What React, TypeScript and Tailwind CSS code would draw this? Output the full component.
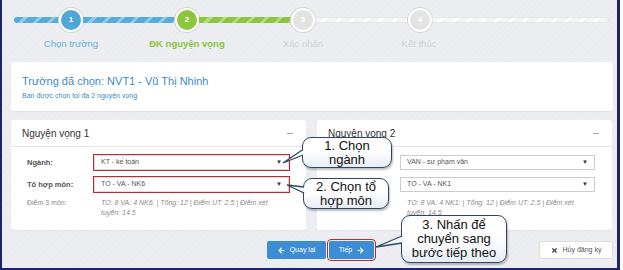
import React from 'react';
import { FaArrowLeft, FaArrowRight, FaTimes } from 'react-icons/fa';

const steps = [
  { n: '1', label: 'Chọn trường', circle: 'bg-[#4ea7d6] text-white', text: 'text-[#62b0db]' },
  { n: '2', label: 'ĐK nguyện vọng', circle: 'bg-[#8cc63f] text-white', text: 'text-[#8cc43f] font-bold' },
  { n: '3', label: 'Xác nhận', circle: 'bg-[#e3e3e3] text-white', text: 'text-[#d2d2d2]' },
  { n: '4', label: 'Kết thúc', circle: 'bg-[#e3e3e3] text-white', text: 'text-[#d2d2d2]' },
];

const blueBar =
  'bg-[repeating-linear-gradient(135deg,#56acd9_0px,#56acd9_7px,#8fcbe9_7px,#8fcbe9_10px)]';
const greenBar =
  'bg-[repeating-linear-gradient(135deg,#8cc63f_0px,#8cc63f_7px,#b3da7c_7px,#b3da7c_10px)]';
const grayBar =
  'bg-[repeating-linear-gradient(135deg,#f4f4f4_0px,#f4f4f4_7px,#ffffff_7px,#ffffff_10px)]';

function Circle({ n, cls }: { n: string; cls: string }) {
  return (
    <div
      className={`w-6 h-6 shrink-0 rounded-full border-2 border-white shadow-[0_0_0_1px_#d6d6d6] flex items-center justify-center text-[8px] font-bold ${cls}`}
    >
      {n}
    </div>
  );
}

function Select({ value, marked }: { value: string; marked?: boolean }) {
  return (
    <div
      className={`w-[195px] h-[15px] bg-white flex items-center justify-between px-[6px] text-[7px] text-[#555] ${
        marked
          ? 'border border-[#ddd] outline-[1.5px] outline-solid outline-[#c0282d] outline-offset-[0px]'
          : 'border border-[#ccc]'
      }`}
    >
      <span>{value}</span>
      <span className="text-[6px] text-[#333]">▼</span>
    </div>
  );
}

function Panel({
  title,
  major,
  combo,
  score,
  marked,
}: {
  title: string;
  major: string;
  combo: string;
  score: string;
  marked?: boolean;
}) {
  return (
    <div className="w-[295px] h-[110px] bg-white rounded-[3px] shadow-[0_1px_1px_rgba(0,0,0,0.05)]">
      <div className="h-[27px] border-b border-[#e8e8e8] flex items-center justify-between px-[11px]">
        <span className="text-[10px] text-[#333]">{title}</span>
        <span className="w-[6px] h-[1px] bg-[#aaa] mr-[2px]" />
      </div>
      <div className="pl-[16px] pt-[8px]">
        <div className="flex items-center">
          <span className="w-[67px] text-[7.5px] font-bold text-[#555]">Ngành:</span>
          <Select value={major} marked={marked} />
        </div>
        <div className="flex items-center mt-[7px]">
          <span className="w-[67px] text-[7.5px] font-bold text-[#555]">Tổ hợp môn:</span>
          <Select value={combo} marked={marked} />
        </div>
        <div className="flex items-start mt-[6px]">
          <span className="w-[74px] text-[7px] leading-[10px] text-[#888]">Điểm 3 môn:</span>
          <span className="w-[180px] text-[7px] leading-[10px] italic text-[#8a8a8a]">{score}</span>
        </div>
      </div>
    </div>
  );
}

function Callout({ className, lines }: { className: string; lines: string[] }) {
  return (
    <div
      className={`absolute rounded-[9px] border-[1.5px] border-[#2d4668] bg-[linear-gradient(180deg,#ffffff_0%,#ffffff_45%,#e6edf5_100%)] shadow-[1px_2px_2px_rgba(0,0,0,0.25)] flex flex-col items-center justify-center text-[13px] leading-[14px] text-[#111] ${className}`}
    >
      {lines.map((l) => (
        <span key={l}>{l}</span>
      ))}
    </div>
  );
}

export default function App() {
  return (
    <div className="w-[623px] h-[270px] bg-white font-['Liberation_Sans',Arial,sans-serif]">
      <div className="relative w-[620px] h-[270px] border-l-2 border-r-[3px] border-b-2 border-[#1c2370] bg-[#eceef1] bg-[repeating-linear-gradient(135deg,#eceef1_0px,#eceef1_3px,#e9ebee_3px,#e9ebee_4px)] overflow-hidden">
        {/* Progress */}
        <div className="flex items-center mt-[8px] ml-[12px] h-6">
          <div className={`w-[45px] h-[6px] rounded-l-full ${blueBar}`} />
          <Circle n="1" cls={steps[0].circle} />
          <div className={`w-[92px] h-[6px] ${blueBar}`} />
          <Circle n="2" cls={steps[1].circle} />
          <div className={`w-[92px] h-[6px] ${greenBar}`} />
          <Circle n="3" cls={steps[2].circle} />
          <div className={`w-[93px] h-[6px] shadow-[inset_0_0_0_1px_#e6e6e6] ${grayBar}`} />
          <Circle n="4" cls={steps[3].circle} />
          <div className={`w-[177px] h-[6px] rounded-r-full shadow-[inset_0_0_0_1px_#e6e6e6] ${grayBar}`} />
        </div>
        <div className="flex ml-[11px] mt-[6px]">
          {steps.map((s) => (
            <div key={s.n} className={`w-[116px] text-center text-[9.5px] leading-[12px] ${s.text}`}>
              {s.label}
            </div>
          ))}
        </div>

        {/* Selected school */}
        <div className="ml-[9px] mt-[12px] w-[602px] h-[49px] bg-white rounded-[3px] shadow-[0_1px_1px_rgba(0,0,0,0.05)] pl-[11px] pt-[13px]">
          <div className="text-[11px] leading-[13px] text-[#3d8ac6]">Trường đã chọn: NVT1 - Vũ Thị Nhinh</div>
          <div className="mt-[3px] text-[7px] leading-[9px] text-[#3d8ac6]">Ban được chọn tối đa 2 nguyện vọng</div>
        </div>

        {/* Wishes */}
        <div className="flex gap-[11px] ml-[9px] mt-[9px]">
          <Panel
            title="Nguyện vọng 1"
            major="KT - kế toán"
            combo="TO - VA - NK6"
            score="TO: 8 VA: 4 NK6: | Tổng: 12 | Điểm UT: 2.5 | Điểm xét tuyển: 14.5"
            marked
          />
          <Panel
            title="Nguyện vọng 2"
            major="VAN - sư phạm văn"
            combo="TO - VA - NK1"
            score="TO: 8 VA: 4 NK1: | Tổng: 12 | Điểm UT: 2.5 | Điểm xét tuyển: 14.5"
          />
        </div>

        {/* Buttons */}
        <div className="flex items-center mt-[11px] ml-[265px] mr-[4px]">
          <button className="w-[59px] h-[18px] bg-[#3c8dd3] text-white text-[7px] rounded-[2px] flex items-center justify-center gap-[5px]">
            <FaArrowLeft className="w-[7px] h-[7px]" />
            Quay lại
          </button>
          <button className="ml-[3px] w-[45px] h-[18px] bg-[#3c8dd3] text-white text-[7px] rounded-[2px] flex items-center justify-center gap-[5px] outline-[1.5px] outline-solid outline-[#c0282d] outline-offset-[1.5px]">
            Tiếp
            <FaArrowRight className="w-[7px] h-[7px]" />
          </button>
          <button className="ml-auto w-[74px] h-[18px] bg-white border border-[#ddd] text-[#555] text-[7px] rounded-[2px] flex items-center justify-center gap-[5px]">
            <FaTimes className="w-[7px] h-[7px] text-[#444]" />
            Hủy đăng ký
          </button>
        </div>

        {/* Annotations */}
        <Callout className="left-[300px] top-[137px] w-[90px] h-[31px]" lines={['1. Chọn', 'ngành']} />
        <Callout className="left-[301px] top-[178px] w-[86px] h-[31px]" lines={['2. Chọn tổ', 'hợp môn']} />
        <Callout
          className="left-[399px] top-[215px] w-[106px] h-[48px]"
          lines={['3. Nhấn để', 'chuyển sang', 'bước tiếp theo']}
        />
        <svg className="absolute left-0 top-0 w-[615px] h-[268px] pointer-events-none" viewBox="0 0 615 268">
          <polygon points="302.5,149 281,163 302.5,155" fill="#fff" />
          <polyline points="301,149.5 281,163 301,155" fill="none" stroke="#2d4668" strokeWidth="1.3" />
          <polygon points="303.5,187 285,185 303.5,193" fill="#fcfdfe" />
          <polyline points="302,187 285,185 302,193" fill="none" stroke="#2d4668" strokeWidth="1.3" />
          <polygon points="401.5,236 374,247 401.5,243" fill="#f3f6fa" />
          <polyline points="400,236 374,247 400,243" fill="none" stroke="#2d4668" strokeWidth="1.3" />
        </svg>
      </div>
    </div>
  );
}
